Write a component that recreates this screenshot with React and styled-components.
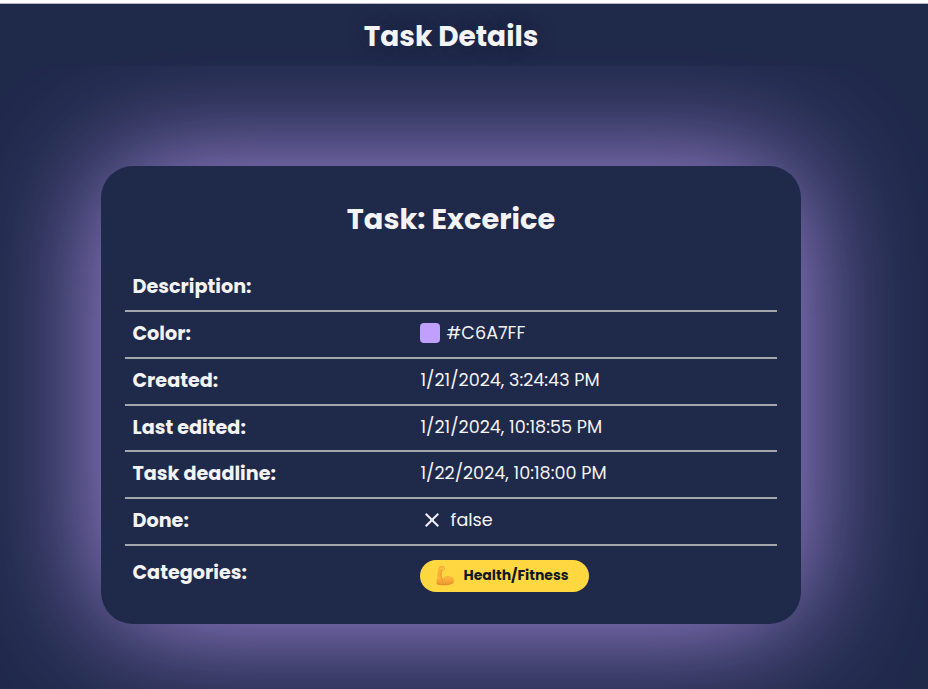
import React from "react";
import styled, { createGlobalStyle } from "styled-components";

const Global = createGlobalStyle`
  * { box-sizing: border-box; }
  body {
    margin: 0;
    background: #fff;
    font-family: Poppins, "Open Sans", sans-serif;
    color: #f3f3f4;
    overflow: hidden;
    -webkit-font-smoothing: antialiased;
  }
`;

const Page = styled.div`
  height: 689px;
  padding-top: 3px;
  background: #fff;
  overflow: hidden;
`;

const Shell = styled.div`
  height: 686px;
  border-top: 1px solid #b4b7c1;
  background: #1f294a;
  overflow: hidden;
`;

const Header = styled.header`
  height: 62px;
  padding: 4px 26px 0 0;
  display: flex;
  align-items: center;
  justify-content: center;
  background: rgba(31, 41, 74, 0.8);
  position: relative;
  z-index: 1;
`;

const PageTitle = styled.h1`
  margin: 0;
  font-size: 28px;
  line-height: 42px;
  text-shadow: 0 0 20px rgba(24, 28, 54, 0.4);
`;

const Card = styled.main`
  width: 700px;
  height: 458px;
  margin: 100px 0 0 101px;
  padding: 31px 24px 24px;
  border-radius: 32px;
  background: #1f294a;
  box-shadow: 0 0 128px -2px #b797f0;
`;

const TaskName = styled.h2`
  margin: 0 0 24.2px;
  font-size: 28.8px;
  line-height: 44px;
  text-align: center;
`;

const Row = styled.div`
  height: ${(p) => (p.$last ? "54px" : "46.8px")};
  display: grid;
  grid-template-columns: 287px 1fr;
  align-items: center;
  border-bottom: ${(p) => (p.$last ? "none" : "2px solid #a5a7af")};
`;

const Label = styled.div`
  padding: 0 8px 0 7.5px;
  font-size: 19.2px;
  line-height: 28.8px;
  font-weight: 700;
`;

const Value = styled.div`
  padding: 0 8px 2.4px 8.4px;
  display: flex;
  align-items: center;
  font-size: 17.6px;
  line-height: 26.4px;
`;

const Swatch = styled.span`
  width: 20px;
  height: 20px;
  margin: 0 6.6px 0 -0.4px;
  border-radius: 4px;
  background: #c19fff;
`;

const CrossIcon = styled.svg`
  width: 24px;
  height: 24px;
  margin: 0 6.6px 0 -0.4px;
  fill: #f3f3f4;
`;

const Chip = styled.span`
  width: 169px;
  height: 32px;
  margin: 8.4px 0 0 -0.4px;
  padding: 0 0 1px 15px;
  display: flex;
  align-items: center;
  gap: 7.5px;
  border-radius: 16px;
  background: #ffd740;
  color: #101727;
  font-size: 14px;
  font-weight: 700;
`;

const ArmIcon = styled.svg`
  width: 21px;
  height: 22px;
  margin-top: 2px;
`;

const Arm = () => (
  <ArmIcon viewBox="0 0 21 22">
    <defs>
      <linearGradient id="skin" x1="0" y1="0" x2="0" y2="1">
        <stop offset="0" stopColor="#f5aa38" />
        <stop offset="0.65" stopColor="#fcb23a" />
        <stop offset="1" stopColor="#ea922e" />
      </linearGradient>
    </defs>
    <path
      d="M4.2 1.8C5.2.8 7.7.6 9 1.4c1 .8 1.3 2.4.5 3.4-.7.8-2 1-2.9.9-.6 2.7-.7 5-.1 7.5.4.9.9 1 1.4.6 1.2-1.8 3-2.8 5.2-2.7 3.6.2 6.2 2.3 6.2 4.6 0 3-4.7 4.6-9.7 4.5-3.4 0-6.3-.2-7.6-1-.8-.7-.6-3.2-.3-5.2.4-3 .9-6 1.5-8.5.1-1.4.4-2.9 1-3.7z"
      fill="url(#skin)"
    />
    <path
      d="M6 3.3c.9-.5 1.7-.5 2.4.1M4.6 4.6c.7-.8 1.2-.9 1.8-.5"
      fill="none"
      stroke="#ffd740"
      strokeWidth="0.9"
      strokeLinecap="round"
    />
    <path
      d="M6.6 5.7c-.6 2.7-.7 5-.1 7.5.4.9.9 1 1.4.6-.7.8-.7 1.4-.3 2M2.3 18.8c4.7 1.5 10.7 1.3 14.7-.7"
      fill="none"
      stroke="#e08a2c"
      strokeWidth="0.8"
      strokeLinecap="round"
    />
  </ArmIcon>
);

const details = [
  ["Description:", null],
  ["Color:", <><Swatch />#C6A7FF</>],
  ["Created:", "1/21/2024, 3:24:43 PM"],
  ["Last edited:", "1/21/2024, 10:18:55 PM"],
  ["Task deadline:", "1/22/2024, 10:18:00 PM"],
  [
    "Done:",
    <>
      <CrossIcon viewBox="0 0 24 24">
        <path d="M19 6.41 17.59 5 12 10.59 6.41 5 5 6.41 10.59 12 5 17.59 6.41 19 12 13.41 17.59 19 19 17.59 13.41 12z" />
      </CrossIcon>
      false
    </>,
  ],
  ["Categories:", <Chip><Arm />Health/Fitness</Chip>],
];

export default function App() {
  return (
    <Page>
      <Global />
      <Shell>
        <Header>
          <PageTitle>Task Details</PageTitle>
        </Header>
        <Card>
          <TaskName>Task: Excerice</TaskName>
          {details.map(([label, value], i) => (
            <Row key={label} $last={i === details.length - 1}>
              <Label>{label}</Label>
              <Value>{value}</Value>
            </Row>
          ))}
        </Card>
      </Shell>
    </Page>
  );
}
